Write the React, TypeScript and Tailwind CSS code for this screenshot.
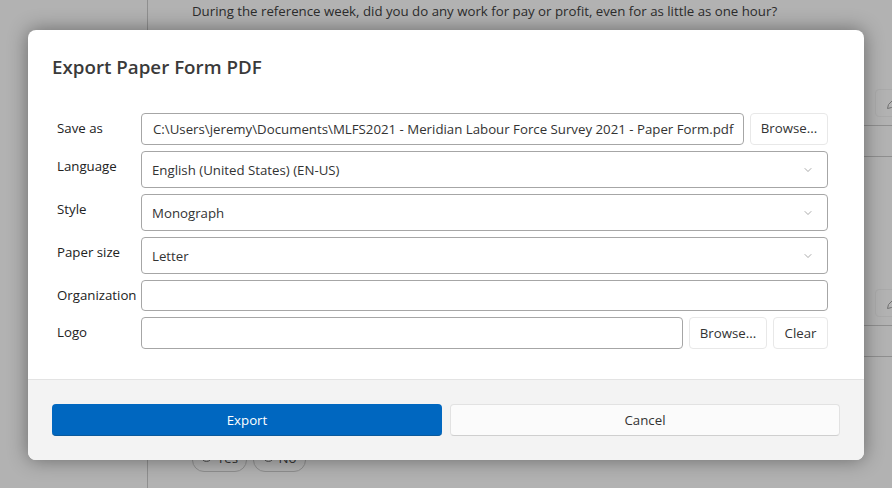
import { ChevronDown } from "lucide-react";

const fieldBorder = "rounded-[4px] border border-[#a6a6a6] bg-white";

function FormRow({ label, children, className }: { label: string; children: React.ReactNode; className: string }) {
  return (
    <div className={`flex gap-[6px] ${className}`}>
      <span className="w-[78px] shrink-0 whitespace-nowrap pt-[5px] leading-[20px] text-[#222]">{label}</span>
      {children}
    </div>
  );
}

function SelectBox({ value }: { value: string }) {
  return (
    <div className={`${fieldBorder} flex flex-1 items-center justify-between pl-[10px] pr-[13px] text-[#333]`}>
      <span className="pt-[2px]">{value}</span>
      <ChevronDown className="h-[12px] w-[12px] text-[#777]" strokeWidth={1.25} />
    </div>
  );
}

function SmallButton({ label, width, className = "" }: { label: string; width: string; className?: string }) {
  return (
    <button className={`${width} ${className} shrink-0 rounded-[4px] border border-[#e8e8e8] bg-white text-center text-[#333]`}>
      {label}
    </button>
  );
}

function PencilTile({ top }: { top: string }) {
  return (
    <div className={`absolute left-[875px] ${top} flex h-[28px] w-[30px] items-center rounded-[4px] border border-[#aaaaaa] pl-[10px]`}>
      <svg width="14" height="14" viewBox="0 0 14 14" fill="none" stroke="#707070" strokeWidth="1">
        <path d="M1.5 12.5 L2.5 8.5 L9.5 1.5 L12.5 4.5 L5.5 11.5 Z" />
      </svg>
    </div>
  );
}

function RadioPill({ label, width }: { label: string; width: string }) {
  return (
    <div className={`${width} flex h-[32px] items-center justify-center gap-[5px] rounded-[12px] border border-[#8f8f8f] pt-[6px]`}>
      <span className="mb-[5px] h-[11px] w-[11px] rounded-full border border-[#555]" />
      {label}
    </div>
  );
}

export default function App() {
  return (
    <div
      className="relative h-[488px] w-[892px] overflow-hidden bg-[#b2b2b2] text-[13.25px]"
      style={{ fontFamily: '"Open Sans", "Noto Sans", sans-serif' }}
    >
      {/* dimmed page behind the dialog */}
      <div className="absolute left-[147px] top-0 h-full w-px bg-[#8f8f8f]" />
      <div className="absolute left-[192px] top-0 whitespace-nowrap leading-[22px] text-[#2c2c2c]">
        During the reference week, did you do any work for pay or profit, even for as little as one hour?
      </div>
      <PencilTile top="top-[89px]" />
      <PencilTile top="top-[289px]" />
      <div className="absolute left-[147px] right-0 top-[125px] h-px bg-[#8f8f8f]" />
      <div className="absolute left-[147px] right-0 top-[156px] h-px bg-[#8f8f8f]" />
      <div className="absolute left-[147px] right-0 top-[325px] h-px bg-[#8f8f8f]" />
      <div className="absolute left-[147px] right-0 top-[356px] h-px bg-[#8f8f8f]" />
      <div className="absolute left-[192px] top-[440px] flex gap-[6px] text-[#333]">
        <RadioPill label="Yes" width="w-[55px]" />
        <RadioPill label="No" width="w-[53px]" />
      </div>

      <div className="absolute left-[28px] top-[30px] flex h-[430px] w-[836px] flex-col overflow-hidden rounded-[8px] bg-white shadow-[0_0_20px_rgba(0,0,0,0.42)]">
        <div className="flex-1 pl-[24px] pr-[36px] pt-[23px]">
          <h1 className="text-[18.75px] font-semibold leading-[28px] text-[#3a3a3a]">Export Paper Form PDF</h1>
          <div className="mt-[32px] flex flex-col pl-[5px]">
            <FormRow label="Save as" className="h-[32px]">
              <div className={`${fieldBorder} flex flex-1 items-center whitespace-nowrap pl-[11px] pt-[2px] text-[#333]`}>
                C:\Users\jeremy\Documents\MLFS2021 - Meridian Labour Force Survey 2021 - Paper Form.pdf
              </div>
              <SmallButton label="Browse..." width="w-[78px]" />
            </FormRow>
            <FormRow label="Language" className="mt-[6px] h-[37px]">
              <SelectBox value="English (United States) (EN-US)" />
            </FormRow>
            <FormRow label="Style" className="mt-[6px] h-[37px]">
              <SelectBox value="Monograph" />
            </FormRow>
            <FormRow label="Paper size" className="mt-[6px] h-[37px]">
              <SelectBox value="Letter" />
            </FormRow>
            <FormRow label="Organization" className="mt-[6px] h-[31px]">
              <div className={`${fieldBorder} flex-1`} />
            </FormRow>
            <FormRow label="Logo" className="mt-[6px] h-[32px]">
              <div className={`${fieldBorder} flex-1`} />
              <SmallButton label="Browse..." width="w-[78px]" className="pt-[2px]" />
              <SmallButton label="Clear" width="w-[55px]" className="pt-[2px]" />
            </FormRow>
          </div>
        </div>
        <div className="grid h-[81px] grid-cols-2 gap-[8px] border-t border-[#e3e3e3] bg-[#f3f3f3] px-[24px] pt-[24px]">
          <button className="h-[32px] rounded-[4px] border-b border-[#0a5a9c] bg-[#0067c0] pt-[2px] text-white">Export</button>
          <button className="h-[32px] rounded-[4px] border border-[#e2e2e2] border-b-[#cfcfcf] bg-[#fbfbfb] pt-[2px] text-[#333]">Cancel</button>
        </div>
      </div>
    </div>
  );
}
